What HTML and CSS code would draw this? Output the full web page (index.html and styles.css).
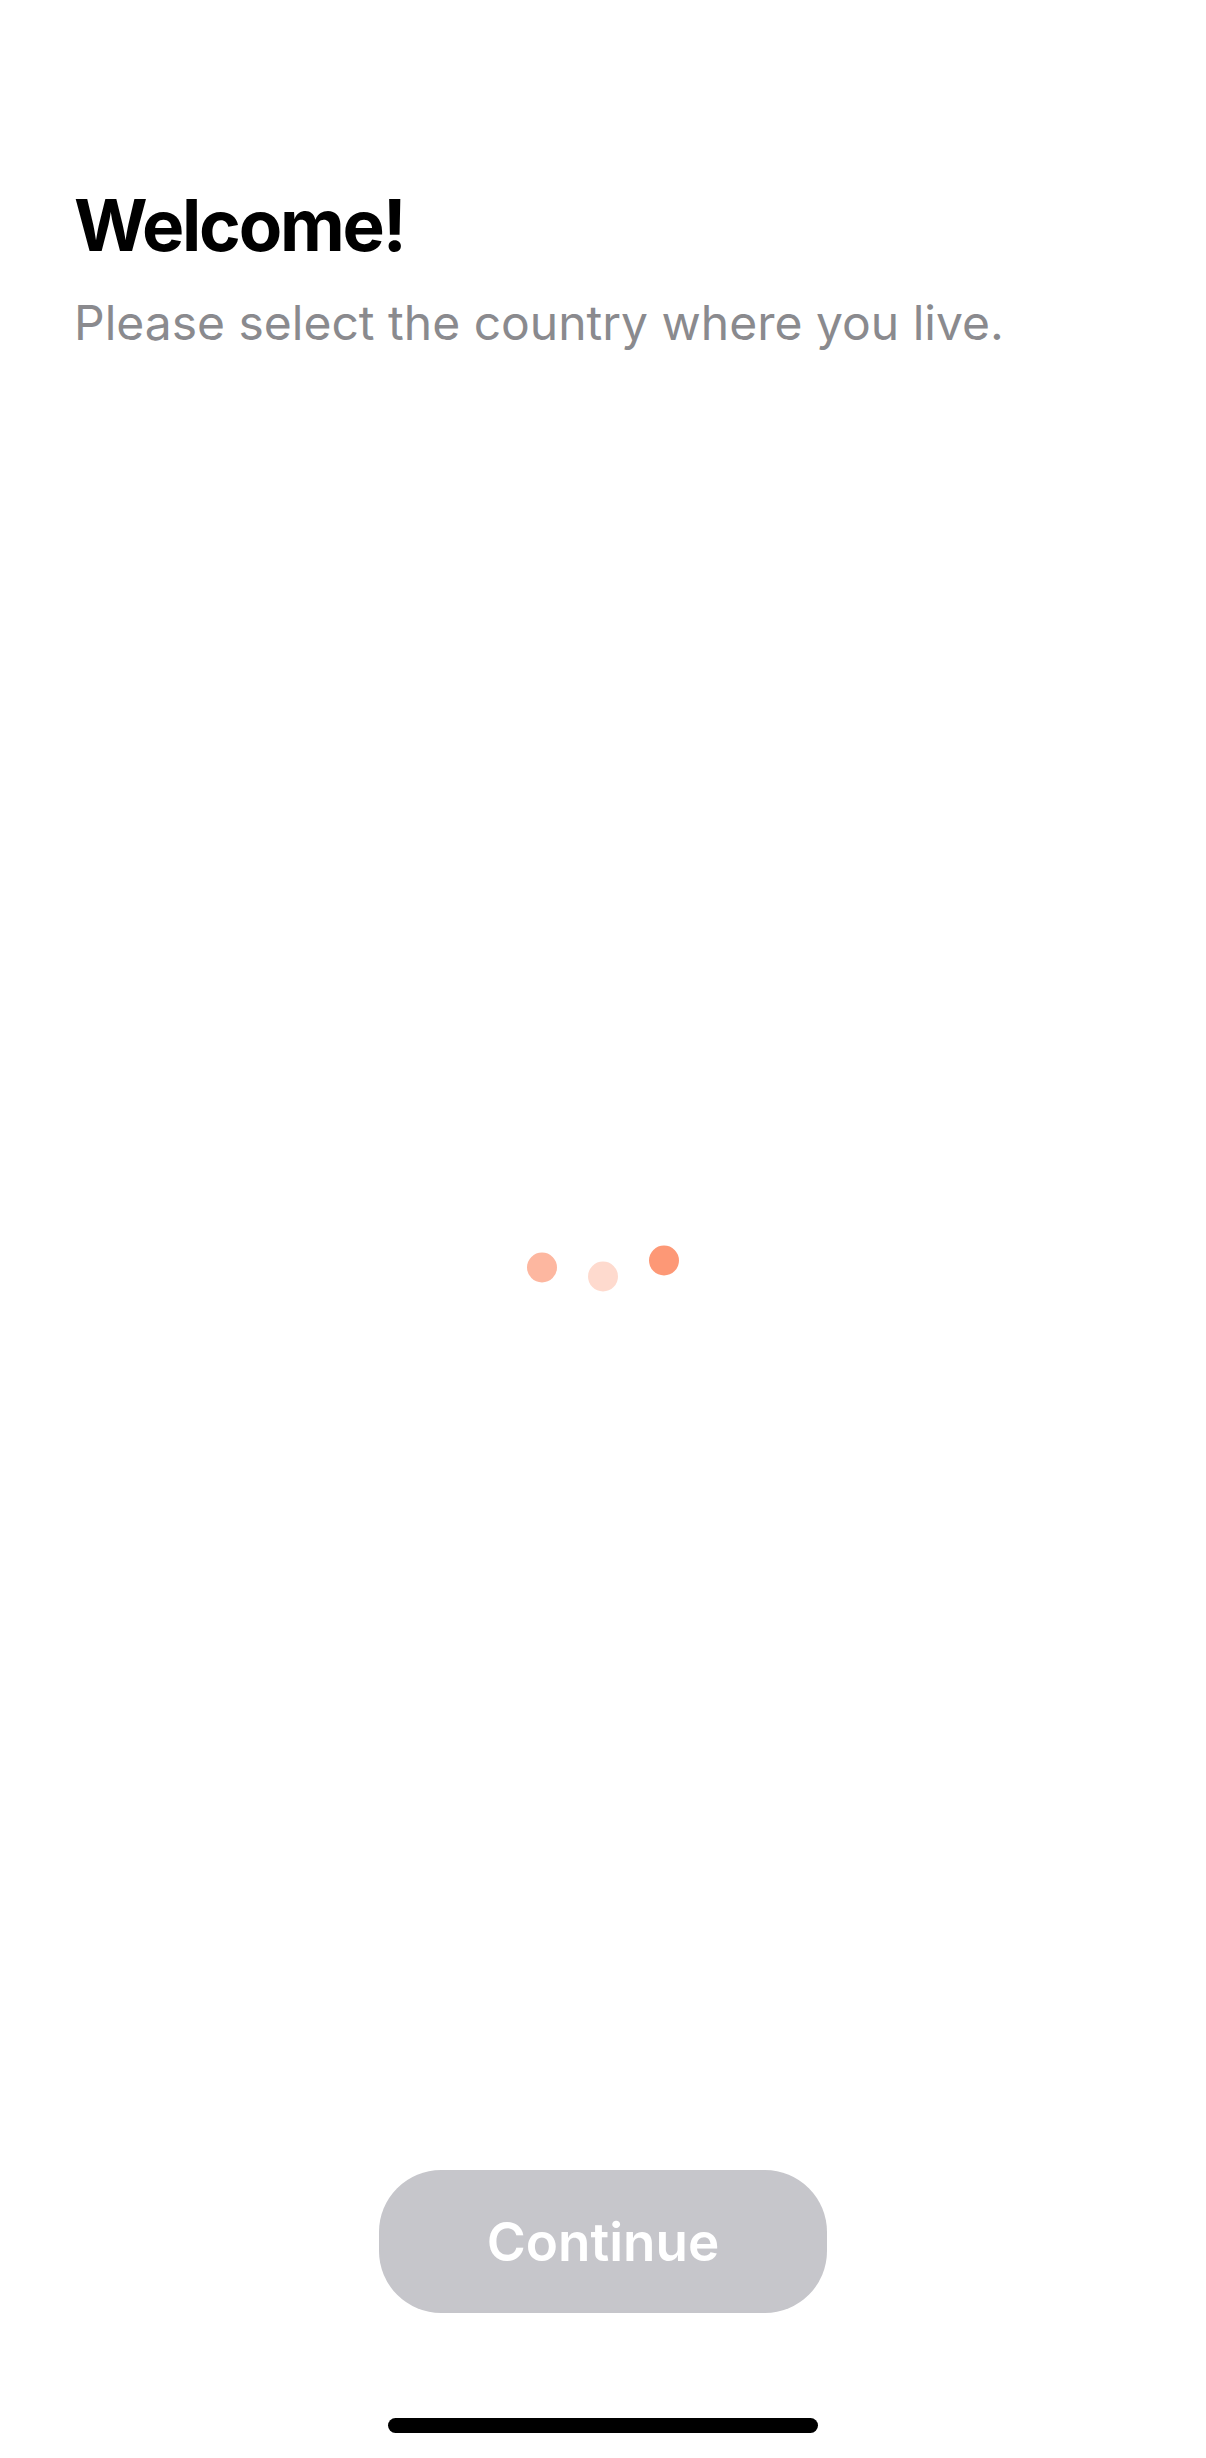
FILE: index.html
```html
<!DOCTYPE html>
<html lang="en">
<head>
<meta charset="utf-8">
<title>Welcome</title>
<link rel="stylesheet" href="styles.css">
</head>
<body>
<div class="screen">
  <header class="header">
    <h1 class="title">Welcome!</h1>
    <p class="subtitle">Please select the country where you live.</p>
  </header>
  <main class="content">
    <div class="loader" aria-label="Loading">
      <span class="dot dot-1"></span>
      <span class="dot dot-2"></span>
      <span class="dot dot-3"></span>
    </div>
  </main>
  <footer class="footer">
    <button class="continue" type="button" disabled>Continue</button>
    <div class="home-indicator"></div>
  </footer>
</div>
</body>
</html>
```

FILE: styles.css
```css
html, body {
  margin: 0;
  padding: 0;
  background: #ffffff;
}

body {
  font-family: Inter, "Liberation Sans", Arial, sans-serif;
}

.screen {
  width: 1206px;
  height: 2458px;
  display: flex;
  flex-direction: column;
  background: #ffffff;
}

.header {
  padding: 182px 0 0 74px;
}

.title {
  margin: 0;
  font-size: 71px;
  line-height: 86px;
  font-weight: 700;
  letter-spacing: -2.2px;
  color: #000000;
}

.subtitle {
  margin: 25px 0 0 0;
  font-size: 48px;
  line-height: 60px;
  font-weight: 400;
  letter-spacing: 0px;
  color: #8a8a8e;
}

.content {
  flex: 1;
  display: flex;
  align-items: center;
  justify-content: center;
}

.loader {
  display: flex;
  align-items: flex-start;
  gap: 31px;
  height: 30px;
}

.dot {
  display: block;
  width: 30px;
  height: 30px;
  border-radius: 50%;
}

.dot-1 {
  background: #fdb7a0;
  transform: translateY(5.5px);
}

.dot-2 {
  background: #fedace;
  transform: translateY(14.5px);
}

.dot-3 {
  background: #fd9876;
  transform: translateY(-1.5px);
}

.footer {
  display: flex;
  flex-direction: column;
  align-items: center;
  padding-bottom: 25px;
}

.continue {
  width: 448px;
  height: 143px;
  border: none;
  border-radius: 62px;
  background: #c6c6cb;
  color: #ffffff;
  font-family: Inter, "Liberation Sans", Arial, sans-serif;
  font-size: 53px;
  font-weight: 600;
  padding: 0;
  margin-bottom: 105px;
}

.home-indicator {
  width: 430px;
  height: 15px;
  border-radius: 8px;
  background: #000000;
}
```
